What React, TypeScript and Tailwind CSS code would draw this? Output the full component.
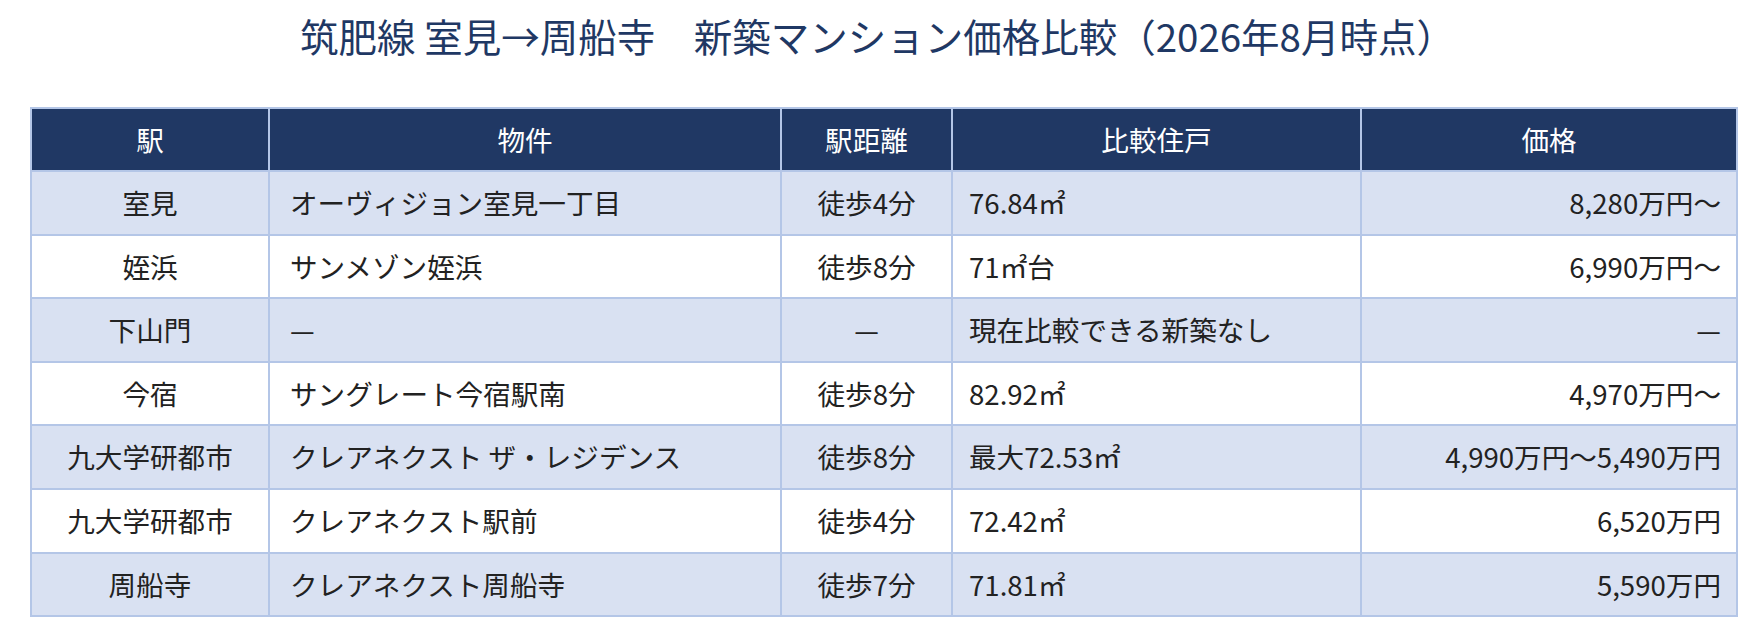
import React from "react";

type Row = {
  station: string;
  name: string;
  walk: string;
  area: string;
  price: string;
};

const rows: Row[] = [
  { station: "室見", name: "オーヴィジョン室見一丁目", walk: "徒歩4分", area: "76.84㎡", price: "8,280万円〜" },
  { station: "姪浜", name: "サンメゾン姪浜", walk: "徒歩8分", area: "71㎡台", price: "6,990万円〜" },
  { station: "下山門", name: "—", walk: "—", area: "現在比較できる新築なし", price: "—" },
  { station: "今宿", name: "サングレート今宿駅南", walk: "徒歩8分", area: "82.92㎡", price: "4,970万円〜" },
  { station: "九大学研都市", name: "クレアネクスト ザ・レジデンス", walk: "徒歩8分", area: "最大72.53㎡", price: "4,990万円〜5,490万円" },
  { station: "九大学研都市", name: "クレアネクスト駅前", walk: "徒歩4分", area: "72.42㎡", price: "6,520万円" },
  { station: "周船寺", name: "クレアネクスト周船寺", walk: "徒歩7分", area: "71.81㎡", price: "5,590万円" },
];

export default function App() {
  return (
    <div className="w-[1755px] h-[638px] bg-white font-['Noto_Sans_CJK_JP','Noto_Sans',sans-serif] text-[#222222]">
      <div className="h-[71px] flex items-center justify-center">
        <h1 className="text-[38.5px] leading-none font-normal text-[#1f3864] whitespace-pre">
          筑肥線 室見→周船寺　新築マンション価格比較（2026年8月時点）
        </h1>
      </div>
      <div className="pl-[30px] mt-[36px]">
        <table className="border-collapse table-fixed w-[1706px] border-2 border-[#b4c6e7]">
          <colgroup>
            <col className="w-[238px]" />
            <col className="w-[512px]" />
            <col className="w-[171px]" />
            <col className="w-[409px]" />
            <col className="w-[376px]" />
          </colgroup>
          <thead>
            <tr className="bg-[#203864] text-white">
              {["駅", "物件", "駅距離", "比較住戸", "価格"].map((h) => (
                <th
                  key={h}
                  className="h-[63px] border-2 border-[#b4c6e7] text-center font-normal text-[27.6px] leading-none p-0"
                >
                  {h}
                </th>
              ))}
            </tr>
          </thead>
          <tbody>
            {rows.map((r, i) => (
              <tr key={i} className={i % 2 === 0 ? "bg-[#d9e1f2]" : "bg-white"}>
                <td className="h-[63.6px] border-2 border-[#b4c6e7] text-center text-[27.6px] leading-none p-0 whitespace-nowrap">
                  {r.station}
                </td>
                <td className="h-[63.6px] border-2 border-[#b4c6e7] text-left text-[27.6px] leading-none pl-[20px] pr-0 py-0 whitespace-nowrap">
                  {r.name}
                </td>
                <td className="h-[63.6px] border-2 border-[#b4c6e7] text-center text-[27.6px] leading-none p-0 whitespace-nowrap">
                  {r.walk}
                </td>
                <td className="h-[63.6px] border-2 border-[#b4c6e7] text-left text-[27.6px] leading-none pl-[16px] pr-0 py-0 whitespace-nowrap">
                  {r.area}
                </td>
                <td className="h-[63.6px] border-2 border-[#b4c6e7] text-right text-[27.6px] leading-none pr-[15px] pl-0 py-0 whitespace-nowrap">
                  {r.price}
                </td>
              </tr>
            ))}
          </tbody>
        </table>
      </div>
    </div>
  );
}
